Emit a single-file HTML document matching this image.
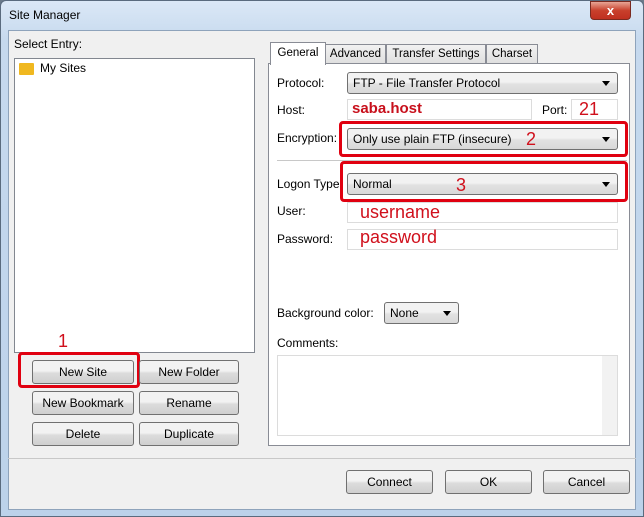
<!DOCTYPE html>
<html><head><style>
*{box-sizing:border-box;margin:0;padding:0}
body{width:644px;height:517px;overflow:hidden;background:#6a7a8a;font-family:"Liberation Sans",sans-serif;font-size:12px;color:#000;position:relative;white-space:nowrap}
.a{position:absolute}
.win{left:0;top:0;width:644px;height:517px;background:linear-gradient(#dbe8f6,#c6d9ee 40px,#bcd2ea);border:1px solid #5a6b7e;border-radius:6px 6px 0 0}
.client{left:8px;top:30px;width:628px;height:480px;background:#f0f0f0;border:1px solid #8ea3bb}
.btn{position:absolute;height:24px;border:1px solid #707070;border-radius:3px;background:linear-gradient(#f2f2f2 45%,#dcdcdc 55%,#cfcfcf);text-align:center;line-height:22px;font-size:12px}
.sel{position:absolute;height:22px;border:1px solid #707070;border-radius:3px;background:linear-gradient(#f2f2f2 45%,#e2e2e2 55%,#d8d8d8);padding-left:5px;line-height:20px}
.sel:after{content:"";position:absolute;right:7px;top:8px;border:4px solid transparent;border-top:5px solid #000;border-bottom:0}
.inp{position:absolute;height:21px;border:1px solid #dcdcdc;background:#fff}
.red{position:absolute;border:3px solid #e00010;border-radius:4px}
.rt{position:absolute;color:#d0101c;font-size:18px}
.tab{position:absolute;top:44px;height:20px;border:1px solid #898c95;background:linear-gradient(#f2f2f2,#e0e0e0);padding:3px 0 0 0;text-align:center;font-size:11.5px}
</style></head><body>
<div class="a win"></div>
<div class="a" style="left:9px;top:8px;font-size:12px">Site Manager</div>
<div class="a" style="left:590px;top:1px;width:41px;height:19px;border:1px solid #7a2a20;border-radius:0 0 4px 4px;background:linear-gradient(#e8a595,#c8402c 50%,#c03020);color:#fff;text-align:center;font-weight:bold;line-height:17px;font-size:13px">x</div>
<div class="a client"></div>
<div class="a" style="left:14px;top:37px">Select Entry:</div>
<div class="a" style="left:14px;top:58px;width:241px;height:295px;background:#fff;border:1px solid #828790"></div>
<div class="a" style="left:19px;top:63px;width:15px;height:12px;background:#f0b820;border-radius:1px"></div>
<div class="a" style="left:40px;top:61px">My Sites</div>
<div class="red" style="left:18px;top:352px;width:122px;height:36px"></div>
<div class="rt" style="left:58px;top:331px">1</div>
<div class="btn" style="left:32px;top:360px;width:102px">New Site</div>
<div class="btn" style="left:139px;top:360px;width:100px">New Folder</div>
<div class="btn" style="left:32px;top:391px;width:102px">New Bookmark</div>
<div class="btn" style="left:139px;top:391px;width:100px">Rename</div>
<div class="btn" style="left:32px;top:422px;width:102px">Delete</div>
<div class="btn" style="left:139px;top:422px;width:100px">Duplicate</div>

<div class="a" style="left:268px;top:63px;width:362px;height:383px;background:#fff;border:1px solid #898c95"></div>
<div class="tab" style="left:325px;width:61px">Advanced</div>
<div class="tab" style="left:386px;width:100px">Transfer Settings</div>
<div class="tab" style="left:486px;width:52px">Charset</div>
<div class="a" style="left:270px;top:42px;width:56px;height:23px;border:1px solid #898c95;border-bottom:none;background:#fff;padding:4px 0 0 0;text-align:center;font-size:11.5px">General</div>

<div class="a" style="left:277px;top:76px">Protocol:</div>
<div class="sel" style="left:347px;top:72px;width:271px">FTP - File Transfer Protocol</div>
<div class="a" style="left:277px;top:103px">Host:</div>
<div class="inp" style="left:347px;top:99px;width:185px"></div>
<div class="a" style="left:352px;top:100px;color:#c8101c;font-weight:bold;font-size:15px">saba.host</div>
<div class="a" style="left:542px;top:103px">Port:</div>
<div class="inp" style="left:571px;top:99px;width:47px"></div>
<div class="rt" style="left:579px;top:99px">21</div>
<div class="a" style="left:277px;top:131px">Encryption:</div>
<div class="sel" style="left:347px;top:128px;width:271px">Only use plain FTP (insecure)</div>
<div class="red" style="left:339px;top:121px;width:289px;height:36px"></div>
<div class="rt" style="left:526px;top:129px">2</div>
<div class="a" style="left:277px;top:160px;width:350px;height:1px;background:#c8c8c8"></div>
<div class="a" style="left:277px;top:177px">Logon Type</div>
<div class="sel" style="left:347px;top:173px;width:271px">Normal</div>
<div class="red" style="left:340px;top:161px;width:288px;height:41px"></div>
<div class="rt" style="left:456px;top:175px">3</div>
<div class="a" style="left:277px;top:204px">User:</div>
<div class="inp" style="left:347px;top:202px;width:271px"></div>
<div class="rt" style="left:360px;top:202px">username</div>
<div class="a" style="left:277px;top:232px">Password:</div>
<div class="inp" style="left:347px;top:229px;width:271px"></div>
<div class="rt" style="left:360px;top:227px">password</div>
<div class="a" style="left:277px;top:306px">Background color:</div>
<div class="sel" style="left:384px;top:302px;width:75px">None</div>
<div class="a" style="left:277px;top:336px">Comments:</div>
<div class="a" style="left:277px;top:355px;width:341px;height:81px;border:1px solid #dcdcdc;background:#fff"></div>
<div class="a" style="left:602px;top:356px;width:15px;height:79px;background:#f2f2f2"></div>

<div class="a" style="left:8px;top:458px;width:628px;height:1px;background:#c8c8c8"></div>
<div class="btn" style="left:346px;top:470px;width:87px">Connect</div>
<div class="btn" style="left:445px;top:470px;width:87px">OK</div>
<div class="btn" style="left:543px;top:470px;width:87px">Cancel</div>
</body></html>
